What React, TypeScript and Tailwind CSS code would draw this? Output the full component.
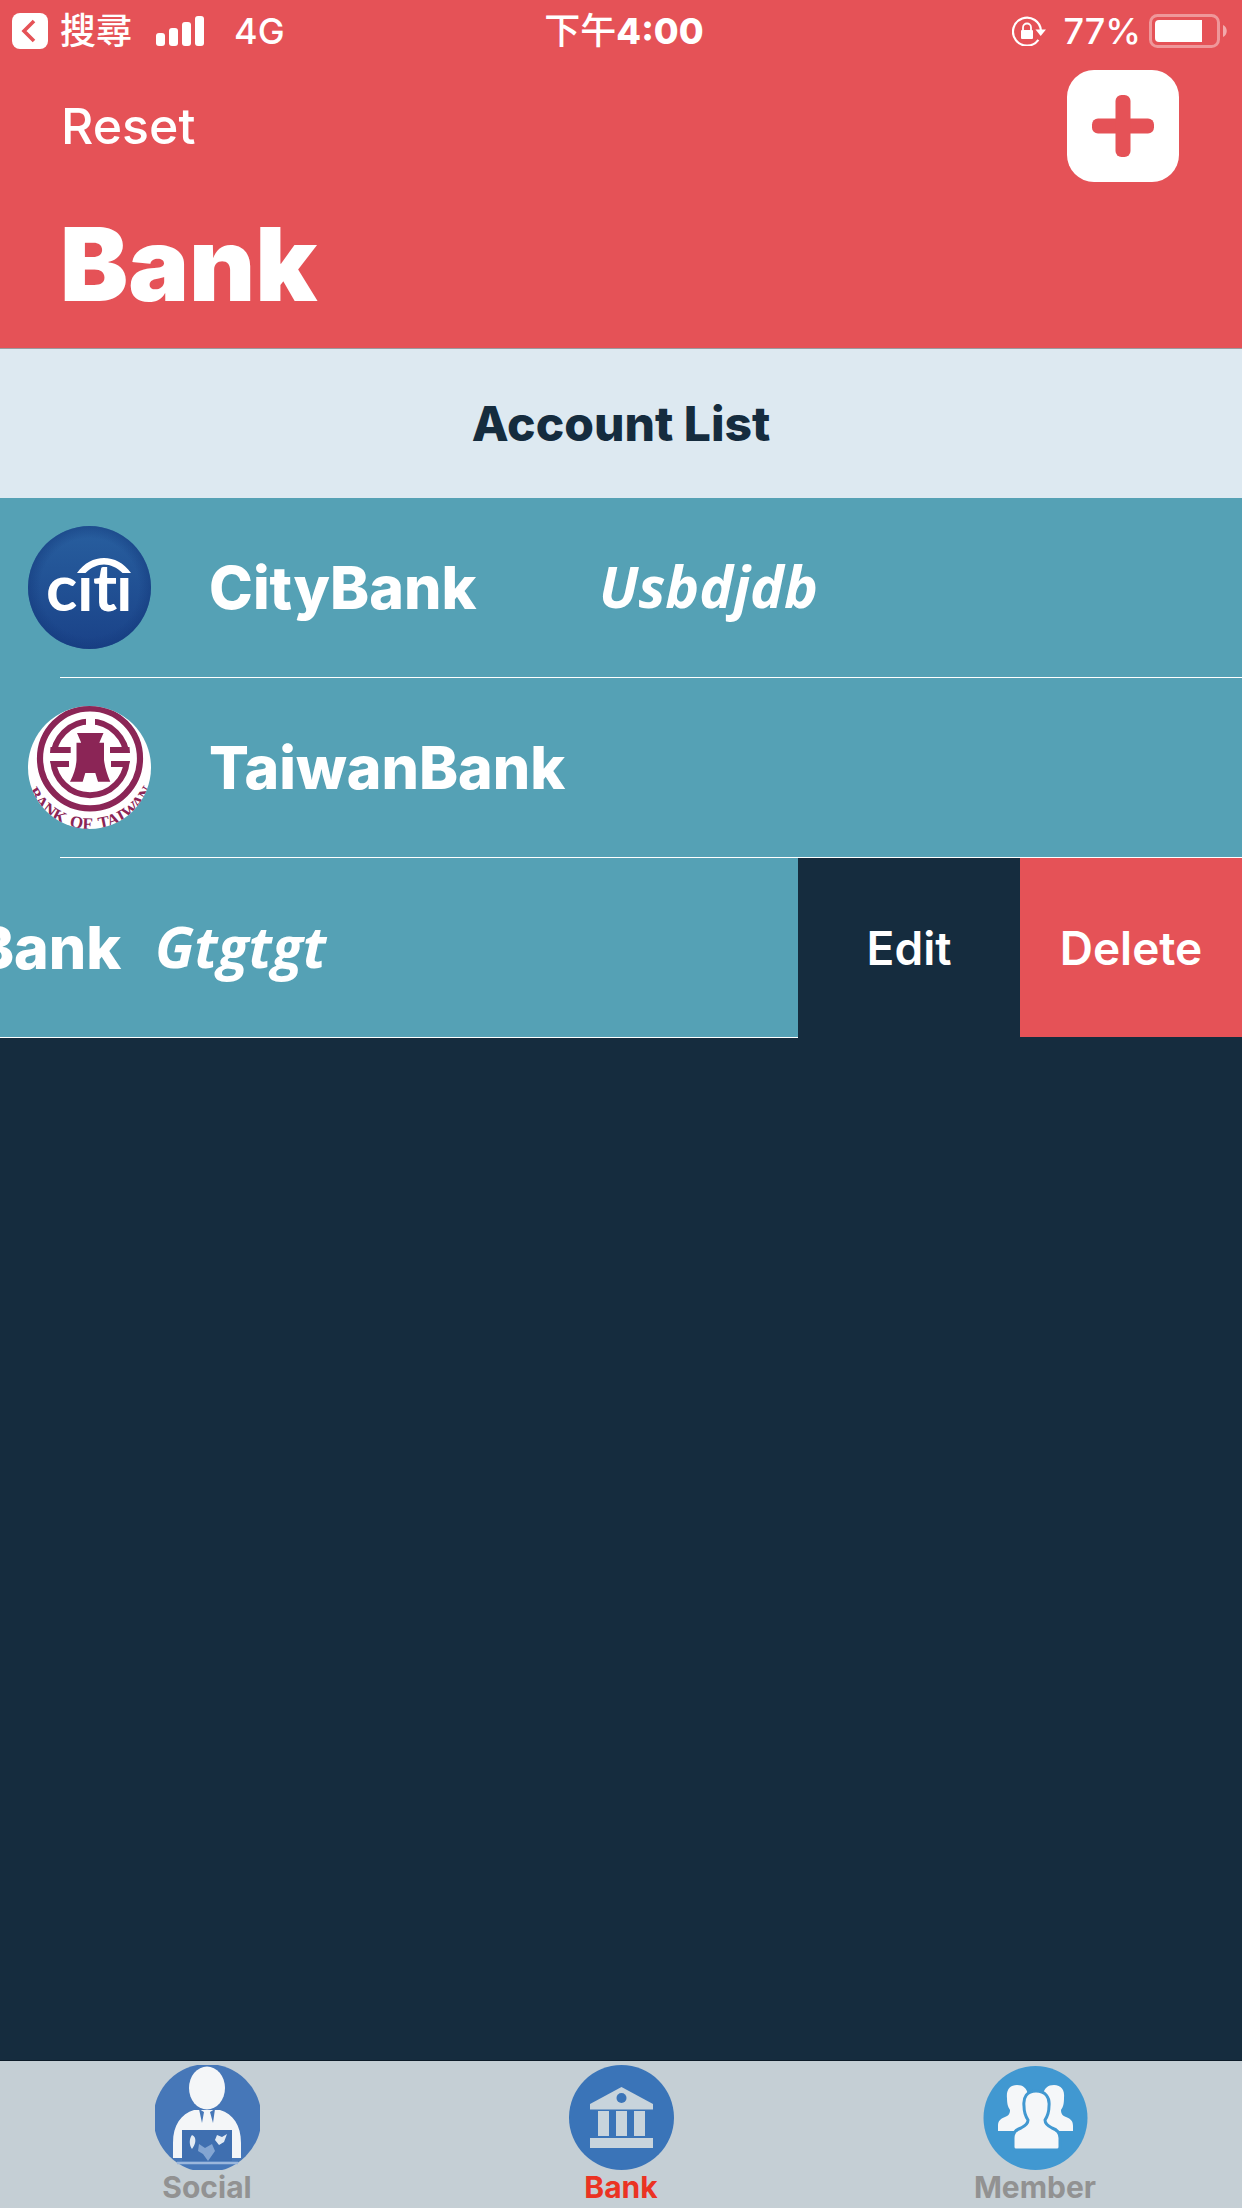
import type { ReactNode } from "react";

const sans = "font-['Inter','Noto_Sans_CJK_TC',sans-serif]";

function StatusBar() {
  return (
    <div className="grid h-[62px] grid-cols-[1fr_auto_1fr] items-center pr-[14px] pl-3 text-[36px] leading-[44px]">
      <div className="flex items-center">
        <button type="button" className="flex items-center gap-3">
          <svg viewBox="0 0 36 36" className="size-9" aria-hidden="true">
            <rect width="36" height="36" rx="8" fill="#fff" />
            <path d="M22 8 12 18l10 10" fill="none" stroke="#e55257" strokeWidth="3.6" />
          </svg>
          <span className="font-medium">搜尋</span>
        </button>
        <svg viewBox="0 0 48 30" className="ml-6 h-[30px] w-12" fill="#fff" aria-label="Signal">
          <rect x="0" y="17" width="9" height="13" rx="3" />
          <rect x="13" y="12" width="9" height="18" rx="3" />
          <rect x="26" y="6" width="9" height="24" rx="3" />
          <rect x="39" y="0" width="9" height="30" rx="3" />
        </svg>
        <span className="ml-[30px] font-medium">4G</span>
      </div>
      <div className="pl-2 font-extrabold">
        <span className="font-medium">下午</span>4:00
      </div>
      <div className="flex items-center justify-end">
        <svg viewBox="0 0 35 30" className="h-[30px] w-[35px]" aria-label="Rotation locked">
          <path d="M26.400 23.800A14 14 0 1 1 29 15" fill="none" stroke="#fff" strokeWidth="2.200" />
          <path d="M23.500 13.500H34L28.700 20z" fill="#fff" />
          <rect x="9" y="14" width="12" height="9" rx="1" fill="#fff" />
          <path d="M11 14.500v-3a4 4 0 0 1 8 0v3" fill="none" stroke="#fff" strokeWidth="1.800" />
        </svg>
        <span className="ml-4 font-medium">77%</span>
        <svg viewBox="0 0 79 34" className="ml-2 h-[34px] w-[79px]" aria-label="Battery">
          <rect x="1.500" y="1.500" width="68" height="31" rx="7" fill="none" stroke="#fff" strokeOpacity=".4" strokeWidth="3" />
          <path d="M10 6h43v22H10a4 4 0 0 1-4-4V10a4 4 0 0 1 4-4z" fill="#fff" />
          <path d="M74 11c5 2 5 10 0 12z" fill="#fff" fillOpacity=".5" />
        </svg>
      </div>
    </div>
  );
}

function CitiLogo() {
  return (
    <svg viewBox="0 0 123 123" className="size-[123px] shrink-0" role="img" aria-label="Citi">
      <defs>
        <linearGradient id="citi-fill" x1="0" y1="0" x2="0" y2="1">
          <stop offset="0" stopColor="#285f9f" />
          <stop offset="1" stopColor="#1a4288" />
        </linearGradient>
        <radialGradient id="citi-edge">
          <stop offset=".8" stopColor="#143a7c" stopOpacity="0" />
          <stop offset="1" stopColor="#143a7c" stopOpacity=".5" />
        </radialGradient>
      </defs>
      <circle cx="61.500" cy="61.500" r="61.500" fill="url(#citi-fill)" />
      <circle cx="61.500" cy="61.500" r="61.500" fill="url(#citi-edge)" />
      <path d="M49 47C63 27 89 27 103 47H94.500C83 35.500 69 35.500 57.500 47z" fill="#fff" />
      <text x="18 49 65 88" y="85" fill="#fff" fontFamily="Lato, sans-serif" fontWeight="700" fontSize="65">
        cıtı
      </text>
    </svg>
  );
}

function TaiwanLogo() {
  return (
    <svg viewBox="0 0 123 123" className="size-[123px] shrink-0" role="img" aria-label="Bank of Taiwan">
      <defs>
        <clipPath id="taiwan-clip">
          <circle cx="61.500" cy="61.500" r="61.500" />
        </clipPath>
        <path id="taiwan-arc" d="M-9 52.400A71 71 0 0 0 133 52.400" />
      </defs>
      <g clipPath="url(#taiwan-clip)" fill="#8b2556">
        <rect width="123" height="123" fill="#fff" />
        <circle cx="62" cy="52.400" r="50" fill="none" stroke="#8b2556" strokeWidth="6.200" />
        <circle cx="62" cy="52.400" r="36.800" fill="none" stroke="#8b2556" strokeWidth="6" />
        <rect x="58" y="10" width="9" height="12" fill="#fff" />
        <rect x="20" y="47" width="84" height="8" fill="#fff" />
        <path d="M22.500 41h20.200v6H22zM82 41h19.500l.5 6H82zM22 55h19v6H24zM83 55h19l-2 6H83z" />
        <path d="M49 27h26.500l-4.200 9.700H76V54c1 8 3 14 6.300 21.700H70L67.300 67h-10l-2.600 8.700H42C46 68 48 62 48.500 54V36.700h4.700z" />
        <g fontFamily="Liberation Serif, serif" fontWeight="700" fontSize="17" textAnchor="middle">
          <text>
            <textPath href="#taiwan-arc" startOffset="59">BANK</textPath>
          </text>
          <text>
            <textPath href="#taiwan-arc" startOffset="102">OF</textPath>
          </text>
          <text>
            <textPath href="#taiwan-arc" startOffset="155">TAIWAN</textPath>
          </text>
        </g>
      </g>
    </svg>
  );
}

function SocialIcon() {
  return (
    <svg viewBox="0 0 105 105" className="size-[105px]" aria-hidden="true">
      <circle cx="52.500" cy="53" r="54" fill="#4677b8" />
      <ellipse cx="52" cy="23" rx="18" ry="21.500" fill="#f4f6f8" />
      <path d="M18 93V78c0-18 8-29 21-33h26c13 4 21 15 21 33v15H77V65H27v28z" fill="#f4f6f8" />
      <path d="M44 44l5 3-2 11zM60 44l-5 3 3 11z" fill="#4677b8" />
      <rect x="27" y="65" width="50" height="31" fill="#3f6fb0" />
      <path d="M37 70c5 2 4 9 0 14-3-4-3-10 0-14zM62 70l5 2 5-3-3 8-5 3-4-5z" fill="#e2eaf3" />
      <path d="M44 79l6 4 7-4 3 7-7 10-5-7-5-3z" fill="#83a5d2" />
      <path d="M22 98h61" stroke="#9bb7dc" strokeWidth="2.500" />
    </svg>
  );
}

function BankIcon() {
  return (
    <svg viewBox="0 0 105 105" className="size-[105px]" aria-hidden="true">
      <circle cx="52.500" cy="52.500" r="52.500" fill="#3a74b8" />
      <g fill="#c8d4dc">
        <path d="M52.500 22 84 39v5.500H21V39z" />
        <rect x="29" y="46" width="11" height="25" />
        <rect x="47" y="46" width="11" height="25" />
        <rect x="65" y="46" width="11" height="25" />
        <rect x="21" y="73" width="63" height="10" />
      </g>
      <circle cx="52.500" cy="33" r="5" fill="#3a74b8" />
    </svg>
  );
}

function MemberIcon() {
  const side = "M34 20c-7 0-11 5-10 13 0 6 1 9 3 12 0 4-2 6-5 7-5 2-7 4-7 9v5h22l8-8V30c-1-7-5-10-11-10z";
  return (
    <svg viewBox="0 0 105 105" className="size-[105px]" aria-hidden="true">
      <circle cx="52.500" cy="53" r="52" fill="#4198d1" />
      <g fill="#f5f7f9">
        <path d={side} />
        <path d={side} transform="matrix(-1 0 0 1 105 0)" />
      </g>
      <path
        d="M53 26c-9 0-13 6-12 15 0 7 2 11 4 14 0 4-3 6-7 8-6 2-8 5-8 10v9c0 2 1 3 3 3h41c2 0 3-1 3-3v-9c0-5-2-8-8-10-4-2-7-4-7-8 2-3 4-7 4-14 1-9-4-15-13-15z"
        fill="#f5f7f9"
        stroke="#4198d1"
        strokeWidth="3"
      />
    </svg>
  );
}

type Account = { bank: string; note?: string; logo?: ReactNode; swiped?: boolean };

const accounts: Account[] = [
  { bank: "CityBank", note: "Usbdjdb", logo: <CitiLogo /> },
  { bank: "TaiwanBank", logo: <TaiwanLogo /> },
  { bank: "TaiwanBank", note: "Gtgtgt", swiped: true },
];

function AccountRow({ bank, note, logo, swiped }: Account) {
  return (
    <li className="flex overflow-hidden">
      <div className={swiped ? "-ml-[444px] w-full shrink-0 bg-[#55a1b5]" : "w-full bg-[#55a1b5]"}>
        <div className="flex h-[179px] items-center pl-7 text-white">
          <div className="w-[181px] shrink-0">{logo}</div>
          <span className="w-[390px] shrink-0 text-[59px] leading-[70px] font-extrabold">{bank}</span>
          {note && (
            <span className="pb-1 font-['Open_Sans',sans-serif] text-[57px] leading-[66px] font-bold italic">{note}</span>
          )}
        </div>
        <div className="ml-[60px] h-px bg-white" />
      </div>
      {swiped && (
        <div className="flex h-[179px] shrink-0 text-[46px] leading-[54px] font-semibold text-white">
          <button type="button" className="w-[222px] bg-[#152c3e]">Edit</button>
          <button type="button" className="w-[222px] bg-[#e55257]">Delete</button>
        </div>
      )}
    </li>
  );
}

const tabs = [
  { label: "Social", icon: <SocialIcon />, active: false },
  { label: "Bank", icon: <BankIcon />, active: true },
  { label: "Member", icon: <MemberIcon />, active: false },
];

export default function App() {
  return (
    <div className={`flex min-h-screen flex-col bg-[#152c3e] ${sans}`}>
      <header className="border-b border-[#9a9a9e] bg-[#e55257] text-white">
        <StatusBar />
        <div className="flex h-32 items-center justify-between pr-[63px] pl-[61px]">
          <button type="button" className="text-[50px] leading-[60px] font-medium">Reset</button>
          <button type="button" aria-label="Add account">
            <svg viewBox="0 0 112 112" className="size-28" aria-hidden="true">
              <rect width="112" height="112" rx="27" fill="#fff" />
              <rect x="25" y="48.500" width="62" height="15" rx="6" fill="#e55257" />
              <rect x="48.500" y="25" width="15" height="62" rx="6" fill="#e55257" />
            </svg>
          </button>
        </div>
        <h1 className="px-[60px] pt-[14px] pb-6 text-[102px] leading-[120px] font-black">Bank</h1>
      </header>
      <main className="flex-1">
        <h2 className="flex h-[149px] items-center justify-center bg-[#dde9f1] text-[48px] leading-[56px] font-extrabold text-[#152c3e]">
          Account List
        </h2>
        <ul>
          {accounts.map((account, i) => (
            <AccountRow key={i} {...account} />
          ))}
        </ul>
      </main>
      <nav className="grid grid-cols-3 border-t border-[#0d1b28] bg-[#c5cfd5]">
        {tabs.map((tab) => (
          <a
            key={tab.label}
            href={`#${tab.label.toLowerCase()}`}
            aria-current={tab.active ? "page" : undefined}
            className={`flex flex-col items-center py-1 text-[30px] leading-[34px] font-bold ${tab.active ? "text-[#eb3323]" : "text-[#929292]"}`}
          >
            {tab.icon}
            {tab.label}
          </a>
        ))}
      </nav>
    </div>
  );
}
